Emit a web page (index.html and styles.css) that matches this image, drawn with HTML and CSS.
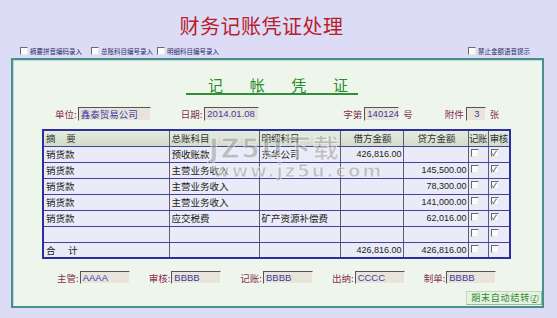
FILE: index.html
```html
<!DOCTYPE html>
<html lang="zh-CN">
<head>
    <meta charset="UTF-8">
    <title>财务记账凭证处理</title>
    <link rel="stylesheet" href="styles.css">
</head>
<body>
    <h1 class="title">财务记账凭证处理</h1>

    <!-- Options row -->
    <div class="options">
        <label class="opt opt-1"><span class="cb"></span>摘要拼音编码录入</label>
        <label class="opt opt-2"><span class="cb"></span>总账科目编号录入</label>
        <label class="opt opt-3"><span class="cb"></span>明细科目编号录入</label>
        <label class="opt opt-right"><span class="cb"></span>禁止金额语音提示</label>
    </div>

    <div class="panel">
        <div class="heading"><span>记</span><span>帐</span><span>凭</span><span>证</span></div>

        <!-- Voucher info -->
        <div class="info">
            <span class="lbl lbl-unit">单位:</span><span class="field f-unit">鑫泰贸易公司</span>
            <span class="lbl lbl-date">日期:</span><span class="field f-date">2014.01.08</span>
            <span class="lbl lbl-no">字第</span><span class="field f-no">140124</span><span class="lbl lbl-after">号</span>
            <span class="lbl lbl-att">附件</span><span class="field f-att">3</span><span class="lbl lbl-after">张</span>
        </div>

        <table class="voucher">
            <colgroup>
                <col style="width:126px"><col style="width:90px"><col style="width:81px">
                <col style="width:63px"><col style="width:65px"><col style="width:20px"><col style="width:22px">
            </colgroup>
            <thead>
                <tr>
                    <th class="left">摘&nbsp;&nbsp;&nbsp;&nbsp;&nbsp;要</th>
                    <th class="left">总账科目</th>
                    <th class="left">明细科目</th>
                    <th>借方金额</th>
                    <th>贷方金额</th>
                    <th class="tight">记账</th>
                    <th class="tight">审核</th>
                </tr>
            </thead>
            <tbody>
                <tr>
                    <td>销货款</td><td>预收账款</td><td>东华公司</td>
                    <td class="num">426,816.00</td><td class="num"></td>
                    <td><span class="cb"></span></td><td><span class="cb on">✓</span></td>
                </tr>
                <tr>
                    <td>销货款</td><td>主营业务收入</td><td></td>
                    <td class="num"></td><td class="num">145,500.00</td>
                    <td><span class="cb"></span></td><td><span class="cb on">✓</span></td>
                </tr>
                <tr>
                    <td>销货款</td><td>主营业务收入</td><td></td>
                    <td class="num"></td><td class="num">78,300.00</td>
                    <td><span class="cb"></span></td><td><span class="cb on">✓</span></td>
                </tr>
                <tr>
                    <td>销货款</td><td>主营业务收入</td><td></td>
                    <td class="num"></td><td class="num">141,000.00</td>
                    <td><span class="cb"></span></td><td><span class="cb on">✓</span></td>
                </tr>
                <tr>
                    <td>销货款</td><td>应交税费</td><td>矿产资源补偿费</td>
                    <td class="num"></td><td class="num">62,016.00</td>
                    <td><span class="cb"></span></td><td><span class="cb on">✓</span></td>
                </tr>
                <tr>
                    <td></td><td></td><td></td>
                    <td class="num"></td><td class="num"></td>
                    <td><span class="cb"></span></td><td><span class="cb"></span></td>
                </tr>
                <tr>
                    <td>合&nbsp;&nbsp;&nbsp;&nbsp;&nbsp;&nbsp;计</td><td></td><td></td>
                    <td class="num">426,816.00</td><td class="num">426,816.00</td>
                    <td><span class="cb"></span></td><td><span class="cb"></span></td>
                </tr>
            </tbody>
        </table>

        <!-- Signatures -->
        <div class="signs">
            <span class="lbl">主管:</span><span class="field f-sign">AAAA</span>
            <span class="lbl">审核:</span><span class="field f-sign">BBBB</span>
            <span class="lbl">记账:</span><span class="field f-sign">BBBB</span>
            <span class="lbl">出纳:</span><span class="field f-sign">CCCC</span>
            <span class="lbl">制单:</span><span class="field f-sign">BBBB</span>
        </div>

        <div class="actions">
            <button class="btn">期末自动结转<small>(<u>Z</u>)</small></button>
        </div>

        <!-- site watermark -->
        <div class="watermark">
            <div class="wm-big">JZ5U下载</div>
            <div class="wm-small">www.jz5u.com</div>
        </div>
    </div>
</body>
</html>
```

FILE: styles.css
```css
/* Page */
body {
    margin: 0;
    width: 557px;
    height: 318px;
    overflow: hidden;
    background-color: #dcdcf6;
    font-family: "Liberation Sans", "Noto Sans CJK SC", sans-serif;
    color: #222;
}

.title {
    margin: 0;
    height: 44px;
    padding-right: 34px;
    padding-top: 14px;
    box-sizing: border-box;
    text-align: center;
    font-family: "Noto Sans CJK SC", serif;
    font-weight: normal;
    font-size: 20px;
    line-height: 24px;
    letter-spacing: 0.5px;
    color: #b8202c;
}

/* Options row */
.options {
    display: flex;
    align-items: center;
    height: 14px;
    font-family: "Noto Sans CJK SC", sans-serif;
    font-size: 6.5px;
    color: #2c2c6a;
}

.opt {
    display: flex;
    align-items: center;
    gap: 2px;
}

.opt-1 { margin-left: 20px; }
.opt-2 { margin-left: 9px; }
.opt-3 { margin-left: 4px; }
.opt-right { margin-left: auto; margin-right: 27px; }

.cb {
    display: inline-block;
    width: 6px;
    height: 6px;
    background: #fbfbfb;
    border-top: 1px solid #6a6a6a;
    border-left: 1px solid #6a6a6a;
    border-bottom: 1px solid #e8e8e8;
    border-right: 1px solid #e8e8e8;
    font-size: 7px;
    line-height: 6px;
    text-align: center;
    color: #222;
    vertical-align: top;
}

/* Voucher panel */
.panel {
    position: relative;
    margin-left: 11px;
    width: 533px;
    height: 250px;
    box-sizing: border-box;
    background-color: #eef6ec;
    border: 2px solid #4a8e90;
    box-shadow: inset 1px 1px 0 #b8dcd6;
}

.heading {
    display: flex;
    justify-content: space-between;
    margin-left: 173px;
    width: 172px;
    box-sizing: border-box;
    padding: 17px 10px 0 22px;
    height: 35px;
    border-bottom: 2px solid #2f8f3a;
    font-family: "Noto Sans CJK SC", serif;
    font-size: 15px;
    line-height: 16px;
    color: #2a8a2a;
}

.info {
    display: flex;
    align-items: center;
    margin-top: 12px;
    height: 14px;
    font-size: 9.5px;
}

.lbl {
    color: #8a2d52;
    font-family: "Noto Sans CJK SC", sans-serif;
    font-size: 9.5px;
}

.field {
    display: inline-block;
    box-sizing: border-box;
    height: 14px;
    padding-left: 2px;
    background-color: #e8e4da;
    border-top: 1px solid #555;
    border-left: 1px solid #555;
    border-bottom: 1px solid #f4f4f0;
    border-right: 1px solid #f4f4f0;
    color: #3a3aa6;
    font-size: 9.5px;
    line-height: 12px;
}

.lbl-unit { margin-left: 42px; }
.f-unit { width: 73px; margin-left: 1px; font-family: "Noto Sans CJK SC", sans-serif; }
.lbl-date { margin-left: 30px; }
.f-date { width: 55px; margin-left: 2px; }
.lbl-no { margin-left: 84px; }
.f-no { width: 35px; margin-left: 2px; }
.lbl-after { margin-left: 4px; }
.lbl-att { margin-left: 32px; }
.f-att { width: 20px; margin-left: 2px; text-align: center; }

/* Entries table */
.voucher {
    margin-top: 8px;
    margin-left: 29px;
    width: 467px;
    table-layout: fixed;
    border-collapse: collapse;
    border: 2px solid #2c2ca4;
    font-size: 9.5px;
}

.voucher tr {
    height: 16px;
}

.voucher th,
.voucher td {
    height: 14px;
    padding: 0 0 0 2px;
    border: 1px solid #4242a0;
    border-left-color: #5c5c78;
    border-right-color: #5c5c78;
    font-family: "Noto Sans CJK SC", sans-serif;
    font-weight: normal;
    white-space: nowrap;
    overflow: hidden;
    line-height: 14px;
}

.voucher th {
    background: linear-gradient(#e4ecdc, #d2dccb);
    color: #333;
    text-align: center;
}

.voucher th.left { text-align: left; }
.voucher th.tight { padding: 0; letter-spacing: -0.5px; }

.voucher td {
    background-color: #ebebf8;
    vertical-align: top;
}

.voucher td.num {
    text-align: right;
    padding-right: 1px;
    font-family: "Liberation Sans", sans-serif;
    font-size: 9px;
    vertical-align: middle;
}

.voucher td .cb {
    margin-top: 2px;
}

/* Signatures */
.signs {
    display: flex;
    align-items: center;
    margin-top: 12px;
    padding-left: 44px;
    height: 13px;
}

.signs .lbl { margin-left: 19px; }
.signs .lbl:first-child { margin-left: 0; }

.f-sign {
    width: 50px;
    height: 13px;
    margin-left: 1px;
    line-height: 11px;
}

.actions {
    display: flex;
    justify-content: flex-end;
    margin-top: 7px;
}

.btn {
    height: 14px;
    padding: 0 2px 0 4px;
    background-color: #e6f2e2;
    border: 1px solid #c4d6c0;
    border-right-color: #9ab69a;
    border-bottom-color: #9ab69a;
    font-family: "Noto Sans CJK SC", sans-serif;
    font-size: 9px;
    line-height: 12px;
    letter-spacing: 0.8px;
    color: #2f8a2f;
}

.btn small {
    font-size: 7px;
    letter-spacing: 0;
}

/* Watermark over the table */
.watermark {
    position: absolute;
    left: 196px;
    top: 76px;
    pointer-events: none;
    color: rgba(150, 150, 150, 0.55);
    font-family: "DejaVu Sans", "Noto Sans CJK SC", sans-serif;
    font-weight: bold;
    line-height: 1;
    -webkit-text-stroke: 1px rgba(255, 255, 255, 0.6);
}

.wm-big {
    font-size: 26px;
    letter-spacing: 2px;
}

.wm-small {
    margin-left: 4px;
    font-size: 18px;
    letter-spacing: 2px;
}
```
